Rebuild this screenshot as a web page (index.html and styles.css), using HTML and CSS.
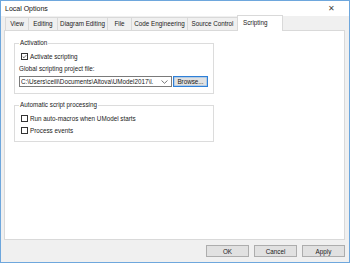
FILE: index.html
```html
<!DOCTYPE html>
<html>
<head>
<meta charset="utf-8">
<link rel="stylesheet" href="styles.css">
</head>
<body>
<div class="window">
  <div class="titlebar">
    <span class="title">Local Options</span>
    <span class="close">✕</span>
  </div>
  <div class="content">
    <div class="tabs">
      <div class="tab t-view">View</div>
      <div class="tab t-edit">Editing</div>
      <div class="tab t-diag">Diagram Editing</div>
      <div class="tab t-file">File</div>
      <div class="tab t-code">Code Engineering</div>
      <div class="tab t-src">Source Control</div>
      <div class="tab t-scr active">Scripting</div>
    </div>
    <div class="panel">
      <fieldset class="group g1">
        <legend>Activation</legend>
        <label class="check"><span class="box checked"><svg viewBox="0 0 7 7" width="7" height="7"><path d="M1 3.6 L2.8 5.3 L6 1.6" fill="none" stroke="#222" stroke-width="0.9"/></svg></span>Activate scripting</label>
        <div class="fieldlabel">Global scripting project file:</div>
        <div class="filerow">
          <div class="combo"><span class="combotext">C:\Users\ceili\Documents\Altova\UModel2017\l.</span><svg class="chev" viewBox="0 0 7 4" width="7" height="4"><path d="M0.5 0.5 L3.5 3.3 L6.5 0.5" fill="none" stroke="#555" stroke-width="0.8"/></svg></div>
          <div class="btn browse">Browse...</div>
        </div>
      </fieldset>
      <fieldset class="group g2">
        <legend>Automatic script processing</legend>
        <label class="check"><span class="box"></span>Run auto-macros when UModel starts</label>
        <label class="check"><span class="box"></span>Process events</label>
      </fieldset>
    </div>
    <div class="buttons">
      <div class="btn">OK</div>
      <div class="btn">Cancel</div>
      <div class="btn">Apply</div>
    </div>
  </div>
</div>
</body>
</html>
```
FILE: styles.css
```css
html, body {
  margin: 0;
  padding: 0;
}
body {
  width: 350px;
  height: 263px;
  overflow: hidden;
  font-family: "Liberation Sans", Arial, sans-serif;
  font-size: 6.3px;
  color: #1a1a1a;
}
.window {
  box-sizing: border-box;
  width: 350px;
  height: 263px;
  border: 1px solid #6ea7dd;
  background: #f0f0f0;
  display: flex;
  flex-direction: column;
}
.titlebar {
  height: 15px;
  background: #ffffff;
  display: flex;
  align-items: center;
  justify-content: space-between;
  padding: 0 14px 0 4px;
  flex: none;
}
.title {
  font-size: 7px;
  color: #111;
}
.close {
  font-size: 8px;
  color: #444;
}
.content {
  flex: 1;
  display: flex;
  flex-direction: column;
  padding: 0 4px 0 3px;
}
.tabs {
  display: flex;
  align-items: flex-end;
  height: 14px;
  padding-left: 1px;
  position: relative;
  z-index: 1;
}
.tab {
  box-sizing: border-box;
  height: 13px;
  line-height: 12px;
  text-align: center;
  white-space: nowrap;
  border: 1px solid #d9d9d9;
  border-bottom: none;
  margin-right: -1px;
  background: #f0f0f0;
}
.t-view { width: 24px; }
.t-edit { width: 30px; }
.t-diag { width: 51px; }
.t-file { width: 25px; }
.t-code { width: 57px; }
.t-src { width: 51px; }
.t-scr { width: 46px; }
.tab.active {
  height: 16px;
  line-height: 13px;
  margin-bottom: -1px;
  background: #ffffff;
  text-align: left;
  padding-left: 5px;
}
.panel {
  box-sizing: border-box;
  height: 210px;
  background: #ffffff;
  border: 1px solid #d9d9d9;
  padding: 8px 0 0 9px;
  display: flex;
  flex-direction: column;
  gap: 7px;
}
.group {
  box-sizing: border-box;
  width: 200px;
  margin: 0;
  border: 1px solid #dcdcdc;
  padding: 0 0 0 6px;
  display: flex;
  flex-direction: column;
}
.group legend {
  padding: 0 1px;
  margin-left: -2px;
  line-height: 8px;
}
.g1 { height: 55px; }
.g2 { height: 41px; }
.check {
  display: flex;
  align-items: center;
  height: 12px;
  gap: 2px;
}
.g1 .check { margin-top: 3px; }
.g2 .check:first-of-type { margin-top: 3px; }
.box {
  box-sizing: border-box;
  width: 7px;
  height: 7px;
  border: 1px solid #333;
  background: #fff;
  display: flex;
  align-items: center;
  justify-content: center;
}
.box svg { display: block; }
.fieldlabel {
  margin-top: 2px;
  height: 9px;
  line-height: 9px;
  margin-left: -2px;
}
.filerow {
  display: flex;
  margin-left: -2px;
  margin-top: 3px;
  gap: 1px;
}
.combo {
  box-sizing: border-box;
  width: 153px;
  height: 11px;
  border: 1px solid #7a7a7a;
  background: #fff;
  display: flex;
  align-items: center;
  padding-left: 1px;
  overflow: hidden;
}
.combotext {
  flex: 1;
  white-space: nowrap;
  overflow: hidden;
}
.chev {
  flex: none;
  margin: 0 3px 0 2px;
}
.btn {
  box-sizing: border-box;
  height: 12px;
  width: 43px;
  border: 1px solid #adadad;
  background: #e1e1e1;
  display: flex;
  align-items: center;
  justify-content: center;
}
.btn.browse {
  width: 35px;
  height: 11px;
  border: 1px solid #2f7fd6;
  box-shadow: inset 0 0 0 0.5px #8ab9ea;
}
.buttons {
  display: flex;
  justify-content: flex-end;
  gap: 5px;
  margin-top: 5px;
}
```
